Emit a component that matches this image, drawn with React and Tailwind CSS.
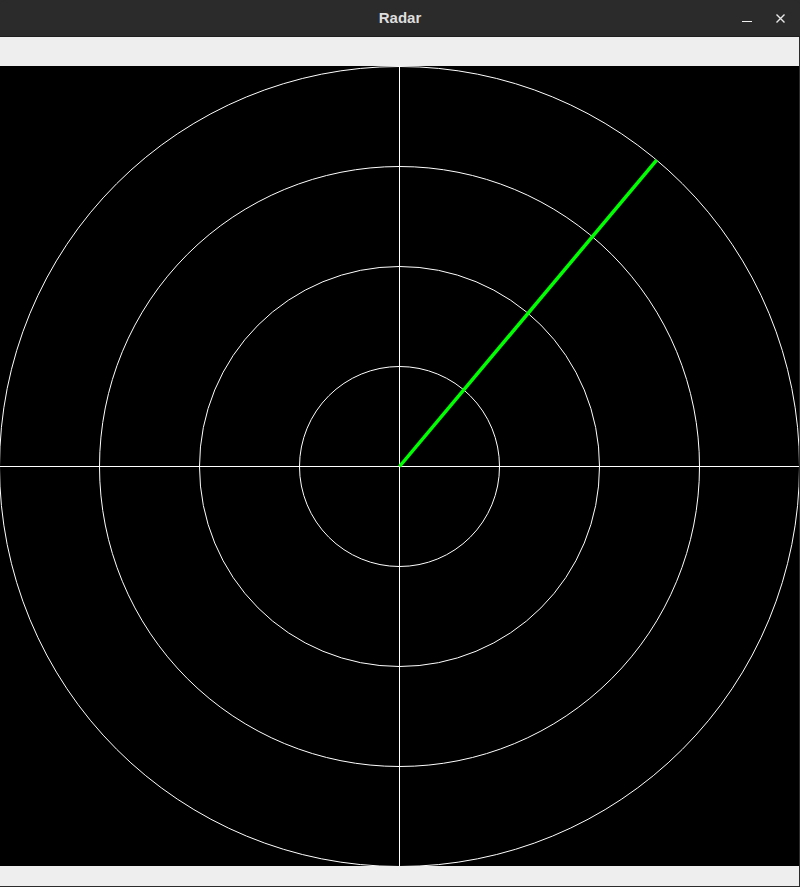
const RINGS = [100, 200, 300, 400];
const SWEEP_DEG = 50;

const RadarScope = ({ angle }) => {
  const cx = 399.5;
  const cy = 400.5;
  const r = 400;
  const rad = (angle * Math.PI) / 180;
  const x2 = cx + r * Math.cos(rad);
  const y2 = cy - r * Math.sin(rad);

  return (
    <svg width="800" height="800" viewBox="0 0 800 800" className="block">
      <rect x="0" y="0" width="800" height="800" fill="#000" />
      {RINGS.map((ring) => (
        <circle
          key={ring}
          cx={cx}
          cy={cy}
          r={ring}
          fill="none"
          stroke="#fff"
          strokeWidth="1"
        />
      ))}
      <line x1={cx} y1="0" x2={cx} y2="800" stroke="#fff" strokeWidth="1" />
      <line x1="0" y1={cy} x2="800" y2={cy} stroke="#fff" strokeWidth="1" />
      <line
        x1={cx}
        y1={cy}
        x2={x2}
        y2={y2}
        stroke="#00ff00"
        strokeWidth="3.5"
      />
    </svg>
  );
};

const App = () => {
  return (
    <div className="w-[800px] h-[887px] flex flex-col bg-[#2b2b2b] overflow-hidden font-['Liberation_Sans',Arial,sans-serif]">
      {/* title bar */}
      <div className="h-[37px] shrink-0 relative flex items-center justify-center bg-[#2b2b2b] rounded-t-[6px] border-b border-[#1e1e1e]">
        <span className="text-[15px] font-bold text-[#dedede]">Radar</span>
        <div className="absolute right-0 top-0 h-full flex items-center gap-[24px] pr-[15px]">
          <span className="block w-[10px] h-px bg-[#f0f0f0] mt-[7px]" />
          <svg width="9" height="9" viewBox="0 0 9 9">
            <path d="M0.5 0.5 L8.5 8.5 M8.5 0.5 L0.5 8.5" stroke="#e8e8e8" strokeWidth="1.4" />
          </svg>
        </div>
      </div>

      <div className="flex-1 flex flex-col mr-px mb-px bg-[#eeeeee]">
        {/* empty menu strip */}
        <div className="h-[29px] shrink-0 bg-[#eeeeee]" />
        <div className="h-[800px] shrink-0 overflow-hidden bg-black">
          <RadarScope angle={SWEEP_DEG} />
        </div>
        <div className="flex-1 bg-[#eeeeee]" />
      </div>
    </div>
  );
};

export default App;
